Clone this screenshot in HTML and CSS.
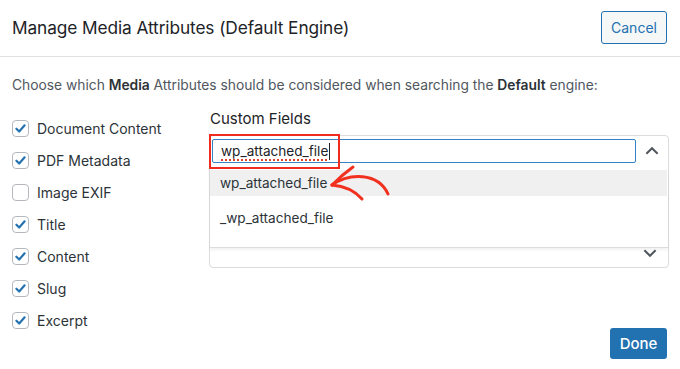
FILE: index.html
```html
<!DOCTYPE html>
<html>
<head>
<meta charset="utf-8">
<link rel="stylesheet" href="styles.css">
</head>
<body>
<div class="modal">
  <header class="header">
    <h1 class="title">Manage Media Attributes (Default Engine)</h1>
    <button class="btn-cancel">Cancel</button>
  </header>
  <p class="desc">Choose which <b>Media</b> Attributes should be considered when searching the <b>Default</b> engine:</p>
  <div class="main">
    <ul class="checks">
      <li class="check"><span class="box on"><svg viewBox="0 0 16 16"><path d="M3.6 8.2l3 3 5.8-6.6"/></svg></span>Document Content</li>
      <li class="check"><span class="box on"><svg viewBox="0 0 16 16"><path d="M3.6 8.2l3 3 5.8-6.6"/></svg></span>PDF Metadata</li>
      <li class="check"><span class="box"></span>Image EXIF</li>
      <li class="check"><span class="box on"><svg viewBox="0 0 16 16"><path d="M3.6 8.2l3 3 5.8-6.6"/></svg></span>Title</li>
      <li class="check"><span class="box on"><svg viewBox="0 0 16 16"><path d="M3.6 8.2l3 3 5.8-6.6"/></svg></span>Content</li>
      <li class="check"><span class="box on"><svg viewBox="0 0 16 16"><path d="M3.6 8.2l3 3 5.8-6.6"/></svg></span>Slug</li>
      <li class="check"><span class="box on"><svg viewBox="0 0 16 16"><path d="M3.6 8.2l3 3 5.8-6.6"/></svg></span>Excerpt</li>
    </ul>
    <div class="fields">
      <div class="fields-label">Custom Fields</div>
      <div class="select">
        <div class="select-top">
          <div class="input"><span class="typed">wp_attached_file</span><span class="caret"></span></div>
          <svg class="chev" viewBox="0 0 16 16"><path d="M3 10.5l5-5 5 5"/></svg>
        </div>
        <svg class="chev chev-down" viewBox="0 0 16 16"><path d="M3 5.5l5 5 5-5"/></svg>
        <ul class="menu">
          <li class="opt active">wp_attached_file</li>
          <li class="opt">_wp_attached_file</li>
        </ul>
        <div class="highlight"></div>
        <svg class="arrow" viewBox="0 0 75 45"><path d="M8 21 C 25 9, 54 8, 64 30"/><path d="M8 21 C 16 13, 22 8, 29 3"/><path d="M8 21 C 20 22, 31 27, 38 35"/></svg>
      </div>
      <button class="btn-done">Done</button>
    </div>
  </div>
</div>
</body>
</html>
```
FILE: styles.css
```css
* { box-sizing: border-box; }
html, body { margin: 0; padding: 0; background: #fff; }
body {
  font-family: "Inter", "Liberation Sans", sans-serif;
  color: #1d2327;
  width: 680px;
  height: 369px;
  overflow: hidden;
}
.header {
  height: 57px;
  border-bottom: 1px solid #e2e2e4;
  display: flex;
  align-items: center;
  justify-content: space-between;
  padding: 0 13px 1px 12px;
}
.title {
  margin: 0;
  font-size: 17.3px;
  font-weight: 400;
  color: #1d2327;
  letter-spacing: -0.1px;
}
.btn-cancel {
  height: 33px;
  width: 66px;
  border: 1px solid #2271b1;
  border-radius: 3px;
  background: #f6f7f7;
  color: #2271b1;
  font-family: inherit;
  font-size: 14px;
  padding: 0;
}
.desc {
  margin: 0;
  padding: 18px 12px 0;
  font-size: 13.8px;
  line-height: 20px;
  color: #50575e;
}
.desc b { color: #2c3338; font-weight: 600; }
.main {
  display: flex;
  padding: 15px 11px 0 12px;
}
.checks {
  list-style: none;
  margin: 0;
  padding: 2px 0 0;
  width: 197px;
  flex: none;
}
.check {
  height: 32px;
  display: flex;
  align-items: center;
  font-size: 14px;
  color: #2c3338;
}
.box {
  width: 17px;
  height: 17px;
  border: 1px solid #b5b8bc;
  border-radius: 4px;
  margin-right: 8px;
  display: flex;
  align-items: center;
  justify-content: center;
  background: #fff;
}
.box svg { width: 15px; height: 15px; }
.box svg path { fill: none; stroke: #2271b1; stroke-width: 2.3; stroke-linecap: round; stroke-linejoin: round; }
.fields {
  flex: 1;
  display: flex;
  flex-direction: column;
}
.fields-label {
  font-size: 15px;
  line-height: 18px;
  color: #1d2327;
  padding-left: 1px;
  margin-bottom: 7px;
}
.select {
  position: relative;
  height: 133px;
  border: 1px solid #dcdcde;
  border-radius: 4px;
}
.select-top {
  display: flex;
  align-items: center;
  padding: 3px 0 0 2px;
}
.input {
  width: 424px;
  height: 24px;
  border: 1px solid #3582c4;
  border-radius: 2px;
  display: flex;
  align-items: center;
  padding-left: 8px;
  font-size: 13.6px;
  color: #1d2327;
}
.typed {
  text-decoration: underline dotted #e0402f;
  text-decoration-thickness: 2px;
  text-underline-offset: 3px;
}
.caret { width: 1px; height: 17px; background: #1d2327; margin-left: 1px; }
.chev { width: 18px; height: 18px; margin-left: 7px; }
.chev path { fill: none; stroke: #50575e; stroke-width: 1.8; }
.chev-down { position: absolute; right: 9px; bottom: 5px; }
.menu {
  position: absolute;
  left: 0;
  right: 0;
  top: 34px;
  height: 78px;
  margin: 0;
  padding: 0;
  list-style: none;
  background: #fff;
  border-bottom: 1px solid #dcdcde;
  box-shadow: 0 2px 3px rgba(0,0,0,0.06);
}
.opt {
  height: 26px;
  display: flex;
  align-items: center;
  padding-left: 10px;
  font-size: 13.6px;
  color: #2c3338;
}
.opt + .opt { height: 44px; }
.opt.active { background: #f0f0f1; margin-right: 1px; }
.highlight {
  position: absolute;
  left: -1px;
  top: -2px;
  width: 131px;
  height: 35px;
  border: 2px solid #f02a1e;
}
.arrow {
  position: absolute;
  left: 114px;
  top: 28px;
  width: 75px;
  height: 45px;
  overflow: visible;
}
.arrow path { fill: none; stroke: #f2301e; stroke-width: 3; stroke-linecap: round; }
.btn-done {
  align-self: flex-end;
  margin: 60px 2px 0 0;
  width: 57px;
  height: 31px;
  background: #2271b1;
  color: #fff;
  border: 0;
  border-radius: 3px;
  font-family: inherit;
  font-size: 15px;
  font-weight: 500;
  padding: 0;
}
```
